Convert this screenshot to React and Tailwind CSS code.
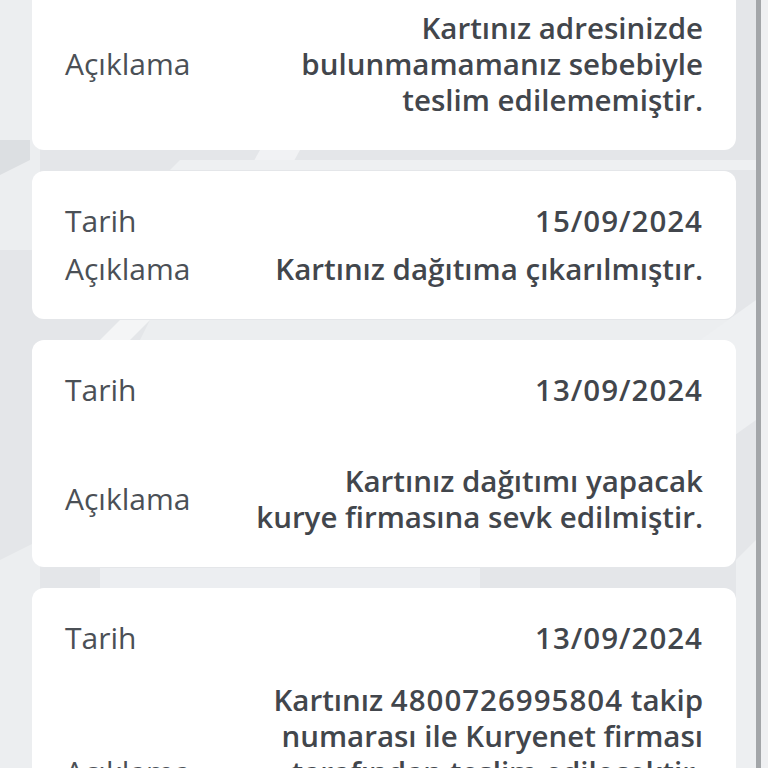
import React from "react";

function Row({ label, children, className = "" }) {
  return (
    <div className={"flex items-center justify-between " + className}>
      <div className="text-[30px] leading-[36px] text-[#4b5056] font-normal">{label}</div>
      <div className="text-right text-[29.5px] leading-[36px] text-[#42464c] font-semibold">{children}</div>
    </div>
  );
}

function Num({ children }) {
  return <span className="tracking-[1px]">{children}</span>;
}

function Bg() {
  return (
    <svg className="absolute inset-0 h-full w-full" viewBox="0 0 756 768" preserveAspectRatio="none">
      <rect x="0" y="0" width="756" height="768" fill="#e4e6e9" />
      <polygon points="0,0 40,0 40,250 0,250" fill="#eceef0" />
      <polygon points="0,140 30,140 30,160 0,175" fill="#dcdfe2" />
      <polygon points="260,150 300,150 290,168 250,168" fill="#f1f2f4" />
      <polygon points="180,160 756,160 756,170 170,170" fill="#eef0f2" />
      <polygon points="150,320 756,320 756,340 140,340" fill="#eceef0" />
      <polygon points="120,320 150,320 130,340 100,340" fill="#f4f5f6" />
      <polygon points="0,560 40,540 40,768 0,768" fill="#eceef0" />
      <polygon points="100,568 480,568 480,590 100,590" fill="#eceef1" />
      <polygon points="700,340 756,300 756,420 700,460" fill="#eef0f2" />
      <polygon points="736,560 756,540 756,768 736,768" fill="#edeff1" />
    </svg>
  );
}

export default function App() {
  return (
    <div
      className="relative flex h-[768px] w-[768px] overflow-hidden bg-[#eef0f2]"
      style={{ fontFamily: '"Open Sans", "Noto Sans", sans-serif' }}
    >
      <div className="relative h-full w-[756px] overflow-hidden">
        <Bg />
        <div className="relative flex flex-col gap-[21px] pl-[32px]">
          <div className="-mt-[22px] w-[704px] rounded-[12px] bg-white px-[33px] pt-[32px] pb-[32px]">
            <Row label="Açıklama">
              Kartınız adresinizde
              <br />
              bulunmamamanız sebebiyle
              <br />
              teslim edilememiştir.
            </Row>
          </div>
          <div className="w-[704px] rounded-[12px] bg-white px-[33px] pt-[32px] pb-[32px]">
            <Row label="Tarih"><Num>15/09/2024</Num></Row>
            <Row label="Açıklama" className="mt-[12px]">
              Kartınız dağıtıma çıkarılmıştır.
            </Row>
          </div>
          <div className="w-[704px] rounded-[12px] bg-white px-[33px] pt-[32px] pb-[32px]">
            <Row label="Tarih"><Num>13/09/2024</Num></Row>
            <Row label="Açıklama" className="mt-[55px]">
              Kartınız dağıtımı yapacak
              <br />
              kurye firmasına sevk edilmiştir.
            </Row>
          </div>
          <div className="w-[704px] rounded-[12px] bg-white px-[33px] pt-[32px] pb-[32px]">
            <Row label="Tarih"><Num>13/09/2024</Num></Row>
            <Row label="Açıklama" className="mt-[26px]">
              Kartınız <Num>4800726995804</Num> takip
              <br />
              numarası ile Kuryenet firması
              <br />
              tarafından teslim edilecektir.
              <br />
              Kargo takip numaranız ile
              <br />
              sorgulama yapabilirsiniz.
            </Row>
          </div>
        </div>
      </div>
      <div className="h-full w-[5px] bg-[#a3a6a9]" />
      <div className="h-full flex-1 bg-[#eff0f2]" />
    </div>
  );
}
